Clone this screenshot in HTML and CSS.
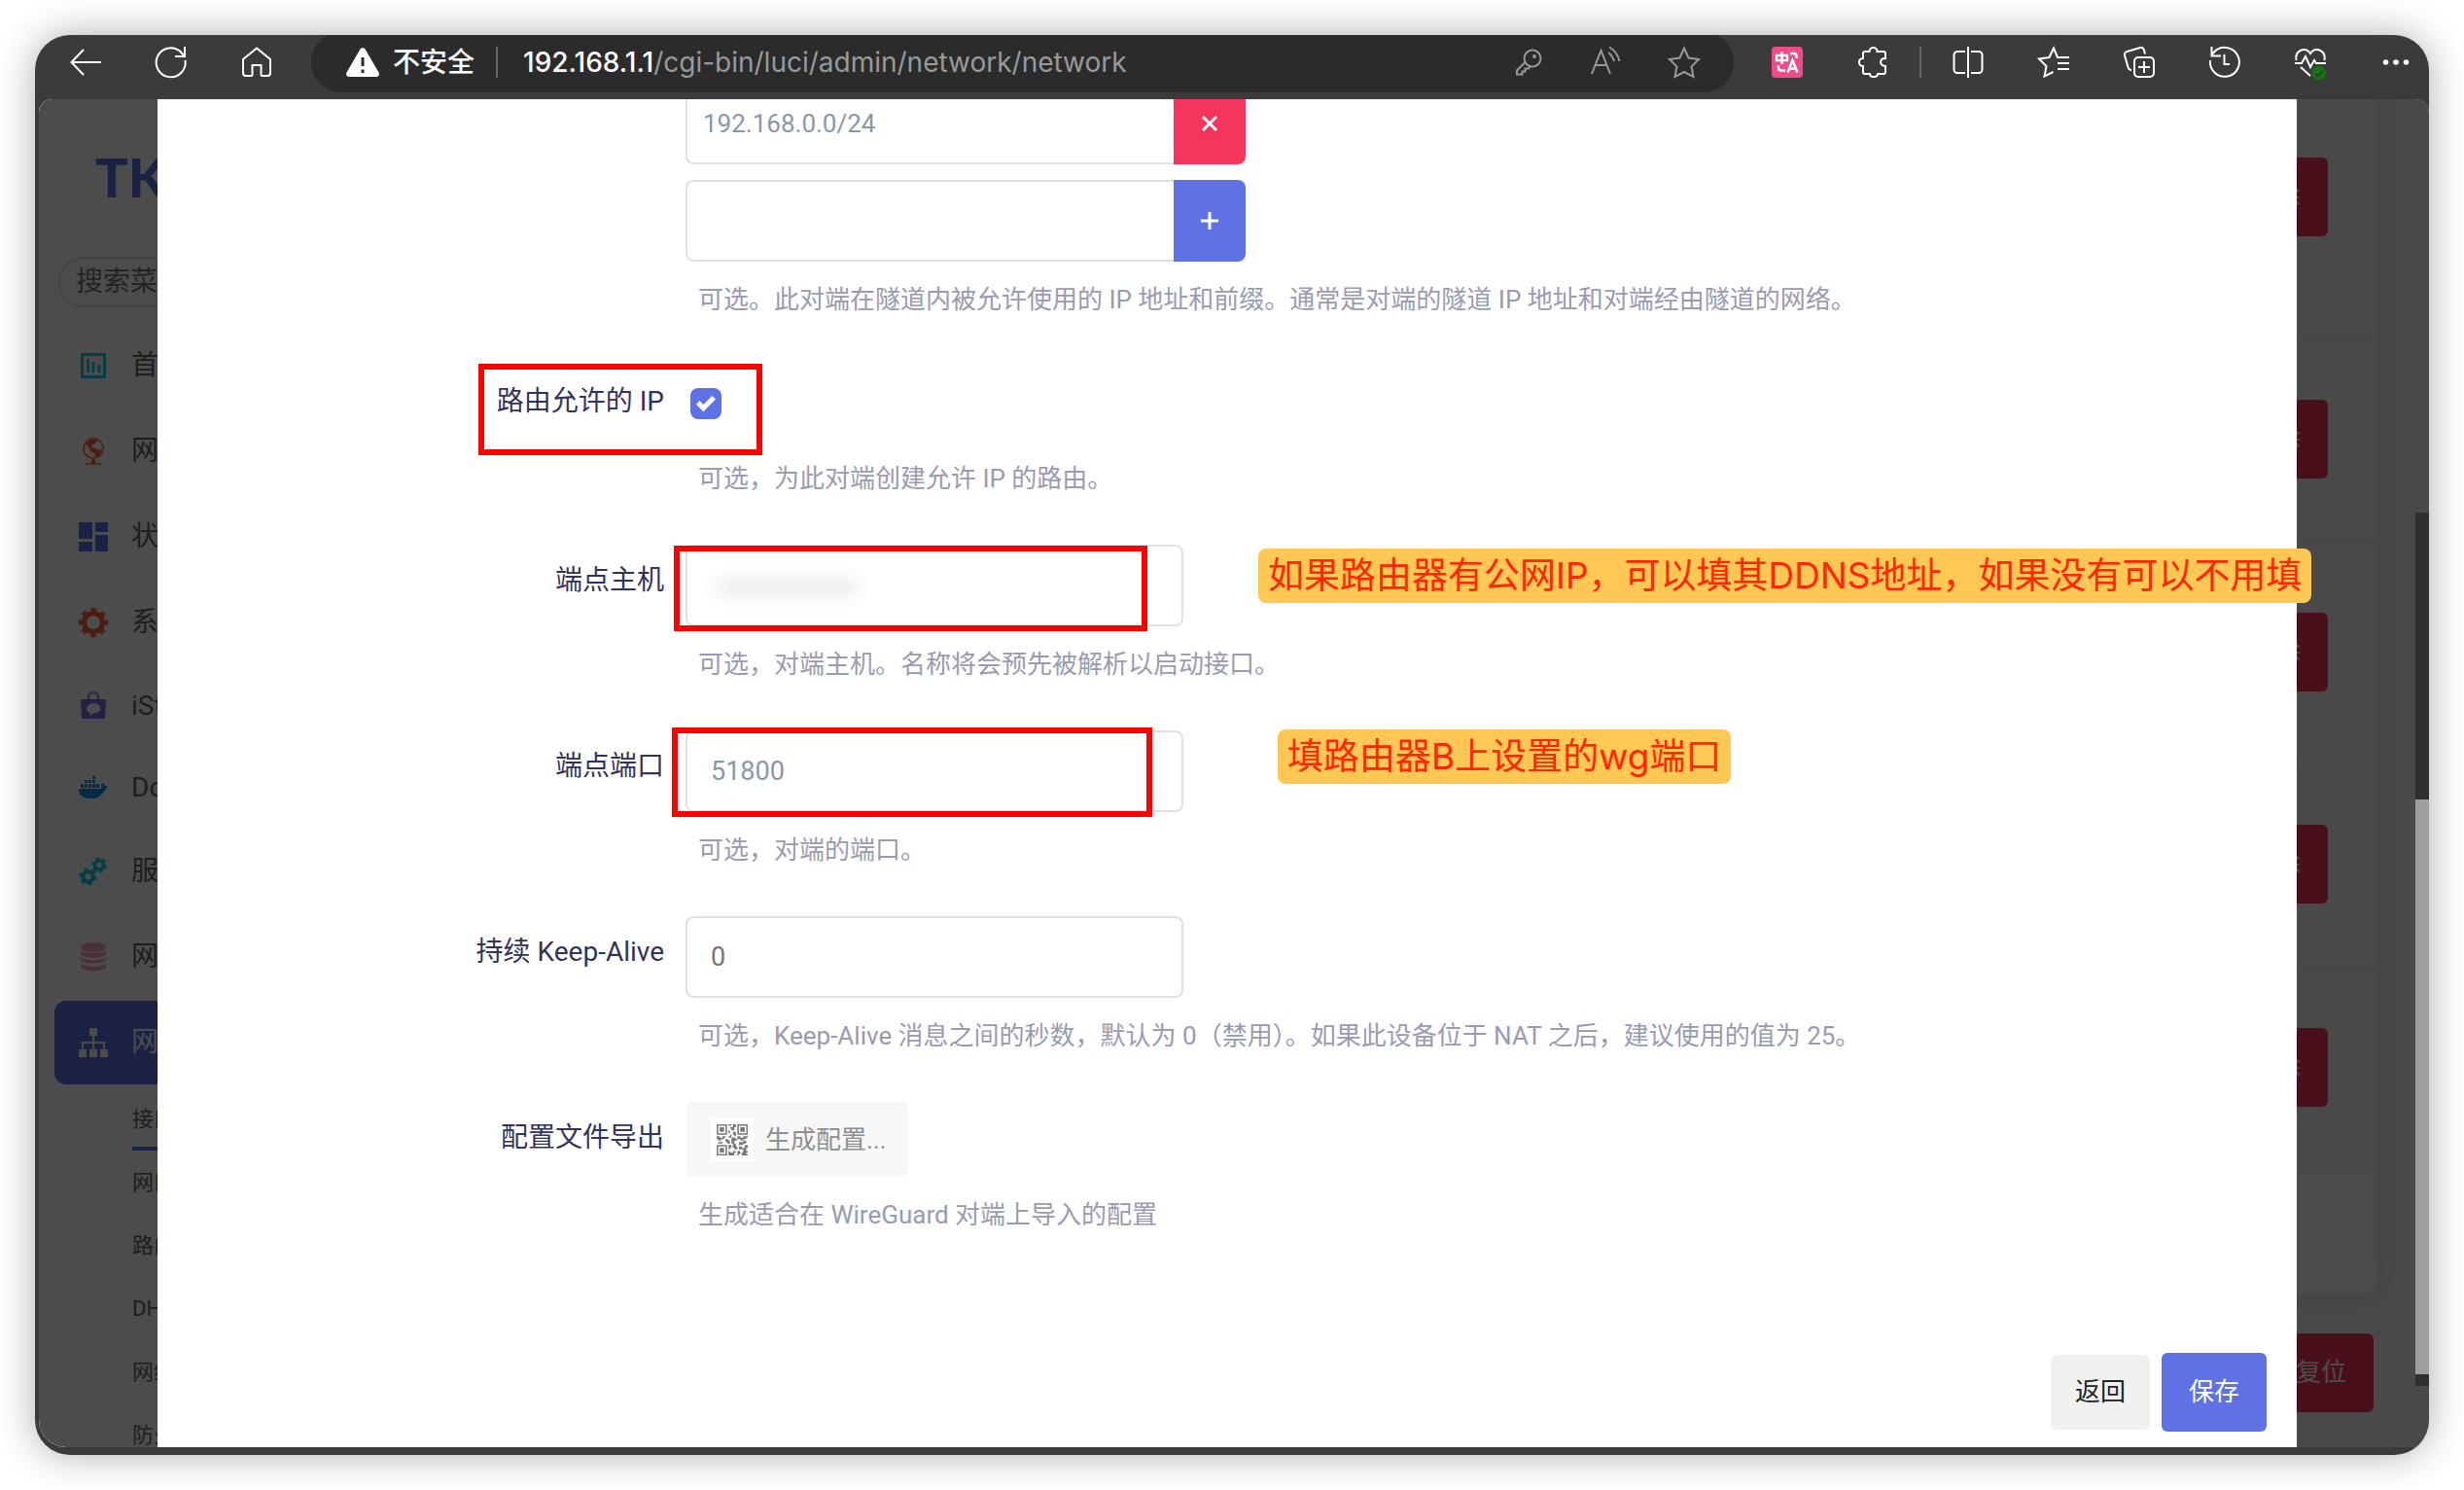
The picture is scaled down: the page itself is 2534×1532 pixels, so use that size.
FILE: index.html
```html
<!DOCTYPE html>
<html lang="zh-CN">
<head>
<meta charset="utf-8">
<title>192.168.1.1 - 网络接口</title>
<link rel="stylesheet" href="styles.css">
</head>
<body>
<div class="window">
  <header class="toolbar">
    <div class="tools">
      <button class="tool" aria-label="后退"><svg viewBox="0 0 32 32"><path d="M32 16H2M14 3 1.500 16 14 29"/></svg></button>
      <button class="tool" aria-label="刷新"><svg viewBox="0 0 32 32"><path d="M30.500 14A15 15 0 1 1 25 4.500L29 9M30 0v10H20"/></svg></button>
      <button class="tool" aria-label="主页"><svg viewBox="0 0 32 32"><path d="M2 13 16 1.500 30 13v14a3 3 0 0 1-3 3h-5a1.500 1.500 0 0 1-1.500-1.500V19h-9v9.500A1.500 1.500 0 0 1 10 30H5a3 3 0 0 1-3-3z"/></svg></button>
    </div>
    <div class="address">
      <svg class="warn" viewBox="0 0 34 30"><path d="M14.500 1.500a3 3 0 0 1 5 0l14 24a3 3 0 0 1-2.500 4.500H3a3 3 0 0 1-2.500-4.500z" fill="#fff" stroke="none"/><path d="M17 10v9M17 22.500v3.500" stroke="#2b2b2b" stroke-width="3"/></svg>
      <span class="insecure">不安全</span>
      <span class="bar"></span>
      <span class="url"><b>192.168.1.1</b>/cgi-bin/luci/admin/network/network</span>
      <button class="tool dim first" aria-label="密码"><svg viewBox="0 0 32 32"><circle cx="20" cy="12" r="8.500"/><path d="M12.500 16 4 24.500V28.500h5.500V25.500h3v-3h3.500l2-2.500"/><circle cx="22" cy="10" r="1" fill="#999"/></svg></button>
      <button class="tool dim" aria-label="朗读"><svg viewBox="0 0 32 32"><path d="M1 28 10.500 4 20 28M4.500 19h12M18 6a17 17 0 0 1 6 9M19 .500A22 22 0 0 1 29.500 15"/></svg></button>
      <button class="tool dim" aria-label="收藏"><svg viewBox="0 0 32 32"><path d="M16 1.500 20.500 11.500 31 13 23.500 20.500 25.500 31 16 26 6.500 31 8.500 20.500 1 13 11.500 11.500z"/></svg></button>
    </div>
    <div class="tools">
      <button class="tool" aria-label="翻译"><svg viewBox="0 0 32 32"><rect width="32" height="32" rx="4" fill="#ee4b8b" stroke="none"/><path d="M5 9h11v5H5zM10.500 5v13M19 7h4a2.500 2.500 0 0 1 2.500 2.500V12M7 19v3a2.500 2.500 0 0 0 2.500 2.500H14" stroke-width="2.400"/><path d="M16.500 26.500 21.500 14l5 12.500M18.500 22.500h6" stroke-width="2.600"/></svg></button>
      <button class="tool" aria-label="扩展"><svg viewBox="0 0 32 32"><path d="M8 5h4.500C12.500-.500 20.500-.500 20.500 5H27a2 2 0 0 1 2 2v5c-6-1-7 8 0 8v6a2 2 0 0 1-2 2h-6c0 4-8 4-8 0H8a2 2 0 0 1-2-2v-6c-5.500 0-5.500-8 0-8V7a2 2 0 0 1 2-2z"/></svg></button>
      <span class="bar"></span>
      <button class="tool" aria-label="分屏"><svg viewBox="0 0 32 32"><path d="M13 5H5a3.500 3.500 0 0 0-3.500 3.500v15A3.500 3.500 0 0 0 5 27h8M19 5h8a3.500 3.500 0 0 1 3.500 3.500v15A3.500 3.500 0 0 1 27 27h-8M16 0v32"/></svg></button>
      <button class="tool" aria-label="收藏夹"><svg viewBox="0 0 32 32"><path d="M32 11H20L16 1.500 11.500 11 1 12.500 8.500 20 6.500 30.500 15.500 26M20 17h12M20 23h12"/></svg></button>
      <button class="tool" aria-label="集锦"><svg viewBox="0 0 32 32"><rect x="11" y="11" width="20" height="20" rx="4"/><path d="M21 15v12M15 21h12M8 24c-2 0-3-1-3.500-3L1 9C.500 7 1.500 5.500 3.500 5L17 1c2-.500 3.500.500 4 2.500l1 4"/></svg></button>
      <button class="tool" aria-label="历史记录"><svg viewBox="0 0 32 32"><path d="M1 14A15 15 0 1 0 5 5.500L2 9M2.500 0v9.500H12M15.500 8v10H21"/></svg></button>
      <button class="tool" aria-label="浏览器健康"><svg viewBox="0 0 32 32"><path d="M1.500 14C-.500 4 11-1 16 7 21-1 32.500 4 30.500 14M0 17h7l4-7 5 11 4-7 2 3h10M6 21l10 9"/><circle cx="25" cy="27" r="7" fill="#107c10" stroke="none"/><path d="m21.500 27.500 2.500 2.500 5-5" stroke="#333"/></svg></button>
      <button class="tool" aria-label="更多"><svg viewBox="0 0 32 32"><g fill="#fff" stroke="none"><circle cx="5.500" cy="16" r="2.800"/><circle cx="16" cy="16" r="2.800"/><circle cx="26.500" cy="16" r="2.800"/></g></svg></button>
    </div>
  </header>

  <div class="viewport">
    <div class="page">
      <nav class="sidebar">
        <a class="brand" href="#">TK</a>
        <input class="search" type="text" placeholder="搜索菜单" aria-label="搜索菜单">
        <ul class="menu">
          <li><a href="#"><svg viewBox="0 0 30 30"><g fill="none" stroke="#11cdef" stroke-width="3"><path d="M3.500 3.500h23v23h-23zM9.500 8v14M15 11v11M21 14v8"/></g></svg>首页</a></li>
          <li><a href="#"><svg viewBox="0 0 30 30"><g fill="none" stroke="#fb6340"><circle cx="15" cy="12" r="10" stroke-width="1.500"/><path d="M7 28h16" stroke-width="1.500"/></g><path fill="#fb6340" d="M9 4c3-2 7-2 10-1l-2 4-4 2 1 2 5 2 5 1-3 6-4 1-1-4-4-2-2-5-3-2zM12 28l2-5h2l2 5z"/></svg>网络向导</a></li>
          <li><a href="#"><svg viewBox="0 0 30 30" fill="#5e72e4"><path d="M0 0h14v17H0zM17 0h13v10H17zM0 20h14v10H0zM17 13h13v17H17z"/></svg>状态</a></li>
          <li><a href="#"><svg viewBox="0 0 30 30"><circle cx="15" cy="15" r="9.500" fill="none" stroke="#fb6340" stroke-width="5"/><circle cx="15" cy="15" r="13" fill="none" stroke="#fb6340" stroke-width="4" stroke-dasharray="5.200 5" stroke-dashoffset="2.600"/></svg>系统</a></li>
          <li class="latin"><a href="#"><svg viewBox="0 0 30 30"><path d="M10 8V6a5 5 0 0 1 10 0v2" fill="none" stroke="#8965e0" stroke-width="2"/><path fill="#8965e0" fill-rule="evenodd" d="M2 8h26l-1 20H3zM15 12c-8 0-9 9-3 10l-1 3 5-3c9 0 8-10-1-10z"/></svg>iStore</a></li>
          <li class="latin"><a href="#"><svg viewBox="0 0 30 30" fill="#0b8ce9"><path d="M0 16h22c2 0 2-2 1-5l2-1 2 3 3 1-3 3c-4 7-8 9-14 9C5 26 0 23 0 16zM2 11h3v4H2zM6 11h3v4H6zM10 11h3v4h-3zM14 11h3v4h-3zM18 11h3v4h-3zM6 7h3v3H6zM10 7h3v3h-3zM14 7h3v3h-3zM14 3h3v3h-3z"/></svg>Docker</a></li>
          <li><a href="#"><svg viewBox="0 0 30 30" fill="none" stroke="#11cdef"><circle cx="9.500" cy="20.500" r="5" stroke-width="4"/><circle cx="9.500" cy="20.500" r="7.500" stroke-width="3" stroke-dasharray="3.900 3.900"/><circle cx="21" cy="8.500" r="4.500" stroke-width="3.500"/><circle cx="21" cy="8.500" r="6.700" stroke-width="2.500" stroke-dasharray="3.500 3.500"/></svg>服务</a></li>
          <li><a href="#"><svg viewBox="0 0 30 30" fill="#f3a4b5"><ellipse cx="15" cy="5" rx="13" ry="5"/><path d="M2 8c3 4 23 4 26 0v4c-3 5-23 5-26 0zM2 15c3 4 23 4 26 0v3c-3 5-23 5-26 0zM2 21.500c3 4 23 4 26 0v4c-3 5-23 5-26 0z"/></svg>网络存储</a></li>
          <li class="active"><a href="#"><svg viewBox="0 0 30 30"><path fill="#fff" d="M11 0h8v8h-8zM0 22h8v8H0zM11 22h8v8h-8zM22 22h8v8h-8z"/><path d="M15 8v14M4 22v-7h22v7" fill="none" stroke="#fff" stroke-width="2"/></svg>网络</a></li>
        </ul>
        <ul class="submenu">
          <li class="current"><a href="#">接口</a></li>
          <li><a href="#">网口</a></li>
          <li><a href="#">路由</a></li>
          <li><a href="#">DHCP/DNS</a></li>
          <li><a href="#">网络诊断</a></li>
          <li><a href="#">防火墙</a></li>
        </ul>
      </nav>
      <main class="main">
        <section class="card">
          <div class="iface tall"><button class="btn danger">删除</button></div>
          <div class="iface"><button class="btn danger">删除</button></div>
          <div class="iface medium"><button class="btn danger">删除</button></div>
          <div class="iface"><button class="btn danger">删除</button></div>
          <div class="iface"><button class="btn danger">删除</button></div>
        </section>
        <div class="page-actions"><button class="btn danger">复位</button></div>
      </main>
    </div>

    <div class="overlay">
      <form class="dialog">
        <div class="row">
          <span></span>
          <div class="field">
            <div class="combo"><input type="text" value="192.168.0.0/24" aria-label="允许的 IP"><button type="button" class="remove" aria-label="移除"><svg viewBox="0 0 18 18"><path d="m2 2 14 14M16 2 2 16"/></svg></button></div>
            <div class="combo"><input type="text" aria-label="添加允许的 IP"><button type="button" class="add" aria-label="添加"><svg viewBox="0 0 18 18"><path d="M0 9h18M9 0v18"/></svg></button></div>
            <p class="hint">可选。此对端在隧道内被允许使用的 IP 地址和前缀。通常是对端的隧道 IP 地址和对端经由隧道的网络。</p>
          </div>
        </div>
        <div class="row">
          <label for="route">路由允许的 IP</label>
          <div class="field">
            <div class="check"><input type="checkbox" id="route" checked></div>
            <p class="hint">可选，为此对端创建允许 IP 的路由。</p>
          </div>
          <i class="mark mark-route"></i>
        </div>
        <div class="row">
          <label for="host">端点主机</label>
          <div class="field">
            <input type="text" id="host">
            <p class="hint">可选，对端主机。名称将会预先被解析以启动接口。</p>
          </div>
          <i class="smudge"></i>
          <i class="mark mark-host"></i>
          <span class="note note-host">如果路由器有公网IP，可以填其DDNS地址，如果没有可以不用填</span>
        </div>
        <div class="row">
          <label for="port">端点端口</label>
          <div class="field">
            <input type="text" id="port" value="51800">
            <p class="hint">可选，对端的端口。</p>
          </div>
          <i class="mark mark-port"></i>
          <span class="note note-port">填路由器B上设置的wg端口</span>
        </div>
        <div class="row">
          <label for="keepalive">持续 Keep-Alive</label>
          <div class="field">
            <input type="text" id="keepalive" placeholder="0">
            <p class="hint">可选，Keep-Alive 消息之间的秒数，默认为 0（禁用）。如果此设备位于 NAT 之后，建议使用的值为 25。</p>
          </div>
        </div>
        <div class="row">
          <label for="export">配置文件导出</label>
          <div class="field">
            <button type="button" class="export" id="export"><svg viewBox="0 0 29 29"><path fill="#fff" d="M0 0h29v29H0z"/><path fill="none" stroke="#777" d="M4.500 4.500h6v6h-6zM18.500 4.500h6v6h-6zM4.500 18.500h6v6h-6z"/><path fill="#777" d="M6 6h3v3H6zM20 6h3v3h-3zM6 20h3v3H6zM12 4h2v1h-2zM15 4h2v2h-1v2h-2V7h-1V6h2zM12 8h1v2h-1zM15 9h2v3h-1v-1h-1zM13 11h1v2h-2v-1h1zM4 12h2v1h2v-1h2v1h-1v1H7v1H5v-1H4zM5 16h3v1H5zM10 14h2v1h1v2h-2v-1h-1zM14 13h3v1h1v1h-2v2h-2zM18 12h2v1h2v-1h3v1h-1v1h-2v1h-2v-1h-2zM19 16h3v-1h2v2h-2v1h-3zM12 18h2v2h-1v1h-1zM15 17h2v2h1v2h-2v-1h-1zM19 19h2v1h2v-2h2v2h-1v2h-2v-1h-3zM12 22h1v1h2v-1h2v1h-1v2h-4zM18 22h2v2h-1v1h-1zM21 23h1v-1h3v1h-1v1h1v1h-4z"/></svg>生成配置...</button>
            <p class="hint">生成适合在 WireGuard 对端上导入的配置</p>
          </div>
        </div>
        <footer class="actions">
          <button type="button" class="btn plain">返回</button>
          <button type="button" class="btn primary">保存</button>
        </footer>
      </form>
    </div>
    <div class="scroll"><i></i></div>
  </div>
</div>
</body>
</html>
```
FILE: styles.css
```css
* { box-sizing: border-box; }
body {
  margin: 0;
  padding: 36px;
  height: 100vh;
  background: #fff;
  font: 26px/40px Roboto, "Noto Sans CJK SC", sans-serif;
  overflow: hidden;
}
button, input { font: inherit; }
button { border: 0; padding: 0; cursor: pointer; }
ul { margin: 0; padding: 0; list-style: none; }
a { text-decoration: none; color: inherit; }

.window {
  height: 100%;
  display: flex;
  flex-direction: column;
  padding: 0 0 8px 4px;
  border-radius: 36px;
  overflow: hidden;
  background: #3b3b3b;
  box-shadow: 0 0 40px rgba(0, 0, 0, .32);
}

/* browser toolbar */
.toolbar {
  flex: none;
  height: 66px;
  display: flex;
  align-items: center;
  padding: 0 18px 10px 32px;
}
.tools { display: flex; align-items: center; gap: 56px; }
.tool { flex: none; width: 32px; height: 32px; background: none; }
.tool svg { display: block; fill: none; stroke: #fff; stroke-width: 2; overflow: visible; }
.tool.dim svg { stroke: #999; }
.bar { flex: none; width: 2px; height: 32px; background: #666; }
.tools .bar { margin: 0 -24px; }
.address {
  flex: 1;
  min-width: 0;
  height: 62px;
  display: flex;
  align-items: center;
  margin: 0 39px 0 40px;
  padding: 0 35px 0 36px;
  border-radius: 31px;
  background: #2b2b2b;
  font-family: Inter, "Noto Sans CJK SC", sans-serif;
  font-size: 28px;
  color: #999;
  white-space: nowrap;
}
.warn { flex: none; width: 34px; height: 30px; }
.insecure { margin: 0 22px 0 14px; color: #fff; font-weight: 500; }
.url { flex: 1; min-width: 0; margin-left: 26px; overflow: hidden; }
.url b { color: #fff; font-weight: 500; }
.address .tool + .tool { margin-left: 48px; }

/* router page below the dialog */
.viewport {
  flex: 1;
  min-height: 0;
  position: relative;
  overflow: hidden;
  border-radius: 14px 14px 0 28px;
}
.page { height: 100%; display: flex; background: #f4f5f6; overflow: hidden; }
.sidebar { flex: none; width: 400px; padding: 40px 16px 0; background: #fff; color: #666; overflow: hidden; }
.brand {
  display: block;
  height: 80px;
  padding-left: 42px;
  font: 900 56px/80px Lato, sans-serif;
  color: #5e72e4;
}
.search {
  display: block;
  width: 360px;
  height: 52px;
  margin: 42px 0 17px 4px;
  padding: 0 16px 2px;
  border: 2px solid #e2e2e2;
  border-radius: 26px;
  background: #fff;
  font-size: 28px;
}
.search::placeholder { color: #757575; }
.menu a {
  display: flex;
  align-items: center;
  gap: 24px;
  height: 86px;
  margin-bottom: 2px;
  padding-left: 25px;
  border-radius: 12px;
  font-size: 28px;
}
.menu .latin a { height: 82px; }
.menu svg { flex: none; width: 30px; height: 30px; }
.menu .active a { background: #5e72e4; color: #fff; }
.submenu { padding: 1px 0 0 80px; font-size: 22px; line-height: 65px; }
.submenu a { display: block; height: 65px; }
.submenu .current a { border-bottom: 4px solid #5e72e4; }
.main { flex: 1; padding-right: 54px; }
.card {
  margin-top: -43px;
  padding-bottom: 128px;
  border-radius: 0 0 12px 12px;
  background: #fbfbfb;
  box-shadow: 0 0 32px rgba(136, 152, 170, .2);
}
.iface {
  height: 209px;
  display: flex;
  align-items: center;
  justify-content: flex-end;
  padding-right: 50px;
  border-bottom: 2px solid #e9e9ec;
  background: #f6f6f6;
}
.iface.tall { height: 289px; }
.iface.medium { height: 228px; }
.iface:last-child { border-color: transparent; }
.page-actions { display: flex; justify-content: flex-end; padding: 40px 3px; }

.btn { padding: 20px 28px; border-radius: 6px; line-height: 41px; color: #fff; }
.danger { background: #f5365c; }
.primary { background: #5e72e4; }
.plain { padding: 18px 25px; background: #f0f0f0; color: #222; }

/* dialog */
.overlay {
  position: absolute;
  inset: 0;
  display: flex;
  padding: 0 136px 0 122px;
  background: rgba(0, 0, 0, .7);
}
.dialog {
  flex: 1;
  min-width: 0;
  display: flex;
  flex-direction: column;
  margin-top: -17px;
  background: #fff;
}
.row {
  position: relative;
  display: grid;
  grid-template-columns: 543px 1fr;
  margin-bottom: 47px;
}
.row > label {
  padding: 17px 22px 0 0;
  text-align: right;
  font-size: 28px;
  color: #32325d;
  white-space: nowrap;
}
.field input[type="text"] {
  display: block;
  width: 512px;
  height: 84px;
  padding: 0 24px;
  border: 2px solid #dee2e6;
  border-radius: 8px;
  background: #fff;
  color: #8898aa;
  font-size: 27px;
}
.field input::placeholder { color: #757575; }
.combo { display: flex; }
.combo + .combo { margin-top: 16px; }
.field .combo input {
  width: 502px;
  padding: 0 16px;
  border-right: 0;
  border-radius: 8px 0 0 8px;
  font-size: 26px;
}
.combo button { display: grid; place-items: center; width: 74px; border-radius: 0 8px 8px 0; }
.combo svg { width: 18px; height: 18px; stroke: #fff; stroke-width: 3; }
.remove { background: #f5365c; }
.add { background: #5e72e4; }
.hint { margin: 18px 0 0; padding-left: 13px; line-height: 42px; color: #9a9ab2; white-space: nowrap; }
.check { height: 77px; padding: 23px 0 0 5px; }
.check input {
  appearance: none;
  display: block;
  width: 32px;
  height: 32px;
  margin: 0;
  border-radius: 8px;
  background: #5e72e4 url("data:image/svg+xml,%3Csvg xmlns='http://www.w3.org/2000/svg' viewBox='0 0 8 8'%3E%3Cpath fill='%23fff' d='M6.564.75l-3.59 3.612-1.538-1.55L0 4.26 2.974 7.25 8 2.193z'/%3E%3C/svg%3E") center / 20px no-repeat;
}
.export {
  display: flex;
  align-items: center;
  gap: 12px;
  height: 77px;
  padding: 0 22px 0 26px;
  border-radius: 6px;
  background: #f7f7f7;
  color: #8f8f8f;
}
.export svg { width: 44px; height: 44px; }
.actions {
  display: flex;
  justify-content: flex-end;
  align-items: center;
  gap: 12px;
  margin-top: auto;
  padding: 0 31px 16px;
}

/* tutorial annotations over the form */
.mark, .note, .smudge { position: absolute; }
.mark { border: 6px solid #f00; }
.mark-route { left: 330px; top: -2px; width: 292px; height: 94px; }
.mark-host { left: 531px; top: 1px; width: 487px; height: 88px; }
.mark-port { left: 529px; top: -3px; width: 494px; height: 92px; }
.note {
  padding: 0 9px 0 10px;
  border-radius: 8px;
  background: #ffc753;
  color: #ff2600;
  font: 400 37px/56px Inter, "Noto Sans CJK SC", sans-serif;
  white-space: nowrap;
}
.note-host { left: 1132px; top: 4px; }
.note-port { left: 1152px; top: -1px; }
.smudge { left: 575px; top: 34px; width: 144px; height: 20px; background: #eceef1; filter: blur(8px); }

/* page scrollbar */
.scroll { position: absolute; right: 0; top: 425px; bottom: 63px; width: 14px; padding: 295px 0 12px; background: #2f2f2f; }
.scroll i { display: block; height: 100%; background: #9e9e9e; }
```
